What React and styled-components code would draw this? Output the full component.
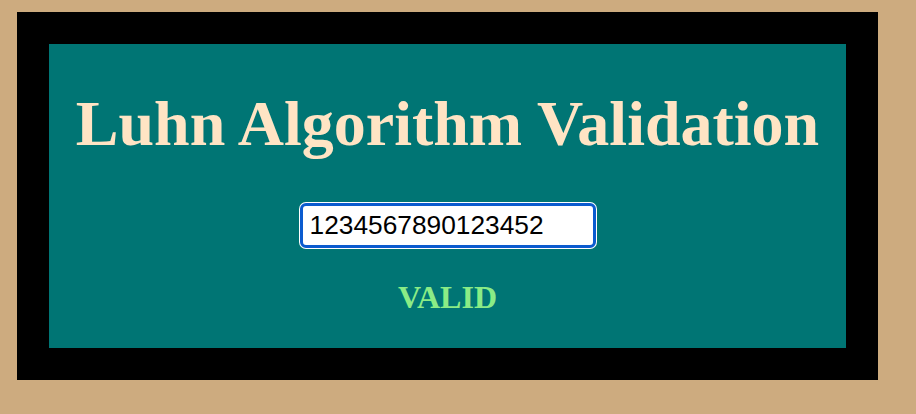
import React, { useState } from "react";
import styled, { createGlobalStyle } from "styled-components";

const luhnValid = (value) => {
  const digits = value.replace(/\D/g, "");
  if (!digits.length) return false;
  let sum = 0;
  for (let i = 0; i < digits.length; i++) {
    let d = Number(digits[digits.length - 1 - i]);
    if (i % 2 === 1) {
      d *= 2;
      if (d > 9) d -= 9;
    }
    sum += d;
  }
  return sum % 10 === 0;
};

export const App = () => {
  const [number, setNumber] = useState("1234567890123452");
  const valid = luhnValid(number);

  return (
    <>
      <GlobalStyle />
      <Frame>
        <Panel>
          <Title>Luhn Algorithm Validation</Title>
          <Input
            type="text"
            value={number}
            onChange={(event) => setNumber(event.target.value)}
          />
          <Result valid={valid}>{valid ? "VALID" : "INVALID"}</Result>
        </Panel>
      </Frame>
    </>
  );
};

export default App;

const GlobalStyle = createGlobalStyle`
  html, body {
    margin: 0;
    height: 100%;
    background-color: #cdab7f;
  }
  body {
    padding: 12px 0 0 17px;
    box-sizing: border-box;
  }
`;

const Frame = styled.div`
  width: 861px;
  border: 32px solid #000;
  box-sizing: border-box;
  background-color: #000;
`;

const Panel = styled.div`
  height: 304px;
  background-color: #007574;
  display: flex;
  flex-direction: column;
  align-items: center;
  padding-top: 43px;
  box-sizing: border-box;
`;

const Title = styled.h1`
  margin: 0 0 41px;
  font-family: "Liberation Serif", "Times New Roman", serif;
  font-weight: bold;
  font-size: 64px;
  line-height: 74px;
  color: #ffe4c4;
`;

const Input = styled.input`
  width: 296px;
  height: 45px;
  margin: 1px 0;
  padding: 0 7px;
  box-sizing: border-box;
  border: 3px solid #0b5bcf;
  border-radius: 6px;
  box-shadow: 0 0 0 1px #fff;
  outline: none;
  background: #fff;
  font-family: "Liberation Sans", Arial, sans-serif;
  font-size: 26.3px;
  color: #000;
`;

const Result = styled.div`
  margin-top: 30px;
  font-family: "Liberation Serif", "Times New Roman", serif;
  font-weight: bold;
  font-size: 32px;
  line-height: 37px;
  color: ${(props) => (props.valid ? "#8aec86" : "#ff8080")};
`;
